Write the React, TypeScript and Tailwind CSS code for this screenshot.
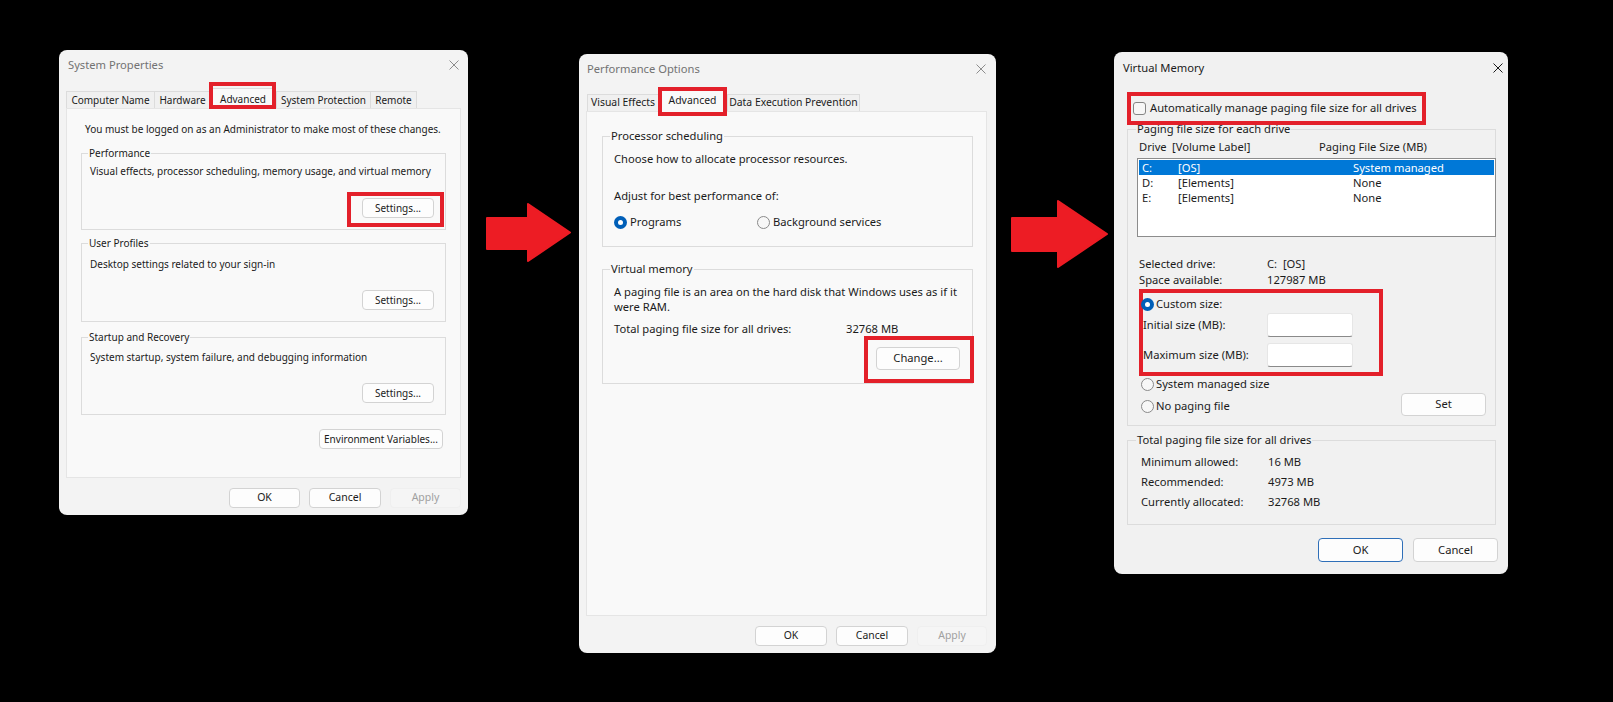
import React from 'react';

type Kids = { children?: React.ReactNode; className?: string };

function CloseX({ className = '' }: { className?: string }) {
  return (
    <svg viewBox="0 0 10 10" className={`h-[10px] w-[10px] shrink-0 ${className}`} fill="none" stroke="currentColor" strokeWidth="1">
      <path d="M0.5 0.5L9.5 9.5M9.5 0.5L0.5 9.5" />
    </svg>
  );
}

function Btn({ children, className = '', disabled = false, primary = false }: Kids & { disabled?: boolean; primary?: boolean }) {
  const look = disabled
    ? 'border-[#efefef] bg-[#f5f5f5] text-[#a0a0a0]'
    : primary
    ? 'border-[#2f6fb8] bg-[#fdfdfd] text-[#1b1b1b]'
    : 'border-[#d3d3d3] bg-[#fdfdfd] text-[#1b1b1b]';
  return <div className={`flex shrink-0 items-center justify-center rounded-[4px] border ${look} ${className}`}>{children}</div>;
}

function Group({ label, className = '', legendClass = '', children }: Kids & { label: string; legendClass?: string }) {
  return (
    <fieldset className={`min-w-0 border border-[#dcdcdc] ${className}`}>
      <legend className={`leading-[16px] ${legendClass}`}>{label}</legend>
      {children}
    </fieldset>
  );
}

function Tab({ children, className = '', active = false }: Kids & { active?: boolean }) {
  return (
    <div
      className={`flex shrink-0 items-center justify-center border-l border-t border-[#dcdcdc] ${
        active ? 'relative z-10 -mb-px border-r bg-[#f9f9f9]' : 'h-[17px] bg-[#f0f0f0]'
      } ${className}`}
    >
      {children}
    </div>
  );
}

function Radio({ checked = false }: { checked?: boolean }) {
  return checked ? (
    <span className="flex h-[13px] w-[13px] shrink-0 items-center justify-center rounded-full bg-[#005fb8]">
      <span className="h-[5px] w-[5px] rounded-full bg-white" />
    </span>
  ) : (
    <span className="h-[13px] w-[13px] shrink-0 rounded-full border border-[#8a8a8a] bg-[#f7f7f7]" />
  );
}

function SizeInput() {
  return <div className="h-[24px] w-[86px] rounded-[3px] border border-[#e6e6e6] border-b-[#8a8a8a] bg-white" />;
}

function SystemProperties() {
  return (
    <div className="flex h-[465px] w-[409px] flex-col rounded-[8px] bg-[#f3f3f3] text-[10px]">
      <div className="flex h-[38px] items-start justify-between pl-[9px] pr-[9px] pt-[7px]">
        <span className="text-[11.2px] leading-[16px] text-[#727272]">System Properties</span>
        <CloseX className="mt-[3px] text-[#8c8c8c]" />
      </div>
      <div className="flex h-[20px] items-end pl-[7px]">
        <Tab className="w-[88px]">Computer Name</Tab>
        <Tab className="w-[56px]">Hardware</Tab>
        <Tab active className="h-[21px] w-[66px]">
          Advanced
          <div className="absolute -left-[2px] -right-[1px] -top-[7px] bottom-0 border-4 border-[#e3202a]" />
        </Tab>
        <Tab className="w-[94px]">System Protection</Tab>
        <Tab className="w-[47px] border-r">Remote</Tab>
      </div>

      <div className="mx-[7px] h-[370px] border border-[#e5e5e5] bg-[#f9f9f9] px-[14px] pt-[12px]">
        <p className="ml-[4px] leading-[16px]">You must be logged on as an Administrator to make most of these changes.</p>

        <Group label="Performance" className="mt-[8px] h-[85px] px-[8px]" legendClass="-ml-[2px] px-[1px]">
          <p className="pt-[2px] leading-[16px]">Visual effects, processor scheduling, memory usage, and virtual memory</p>
          <div className="mt-[19px] flex justify-end">
            <div className="relative mr-[3px]">
              <Btn className="h-[20px] w-[72px]">Settings...</Btn>
              <div className="absolute -bottom-[9px] -left-[15px] -right-[10px] -top-[6px] border-4 border-[#e3202a]" />
            </div>
          </div>
        </Group>

        <Group label="User Profiles" className="mt-[5px] h-[87px] px-[8px]" legendClass="-ml-[2px] px-[1px]">
          <p className="pt-[5px] leading-[16px]">Desktop settings related to your sign-in</p>
          <div className="mt-[18px] flex justify-end">
            <Btn className="mr-[3px] h-[20px] w-[72px]">Settings...</Btn>
          </div>
        </Group>

        <Group label="Startup and Recovery" className="mt-[7px] h-[86px] px-[8px]" legendClass="-ml-[2px] px-[1px]">
          <p className="pt-[4px] leading-[16px]">System startup, system failure, and debugging information</p>
          <div className="mt-[18px] flex justify-end">
            <Btn className="mr-[3px] h-[20px] w-[72px]">Settings...</Btn>
          </div>
        </Group>

        <div className="mt-[14px] flex justify-end">
          <Btn className="mr-[3px] h-[20px] w-[124px]">Environment Variables...</Btn>
        </div>
      </div>

      <div className="mt-[10px] flex justify-end gap-[9px] pr-[7px] text-[10.5px]">
        <Btn className="h-[20px] w-[71px]">OK</Btn>
        <Btn className="h-[20px] w-[72px]">Cancel</Btn>
        <Btn disabled className="h-[20px] w-[71px]">Apply</Btn>
      </div>
    </div>
  );
}

function PerformanceOptions() {
  return (
    <div className="flex h-[599px] w-[417px] flex-col rounded-[8px] bg-[#f3f3f3] text-[11.2px]">
      <div className="flex h-[35px] items-start justify-between pl-[8px] pr-[10px] pt-[7px]">
        <span className="leading-[16px] text-[#727272]">Performance Options</span>
        <CloseX className="mt-[3px] text-[#8c8c8c]" />
      </div>
      <div className="flex h-[22px] items-end pl-[8px] text-[10.4px]">
        <Tab className="w-[71px]">Visual Effects</Tab>
        <Tab active className="h-[23px] w-[69px]">
          Advanced
          <div className="absolute -bottom-[4px] -left-[1px] -right-[1px] -top-[3px] border-4 border-[#e3202a]" />
        </Tab>
        <Tab className="w-[133px] border-r">Data Execution Prevention</Tab>
      </div>

      <div className="ml-[7px] h-[505px] w-[401px] border border-[#e5e5e5] bg-[#f9f9f9] pl-[15px] pt-[16px]">
        <Group label="Processor scheduling" className="h-[119px] w-[371px] px-[11px]" legendClass="-ml-[4px] px-[1px]">
          <p className="pt-[6px] leading-[17px]">Choose how to allocate processor resources.</p>
          <p className="mt-[20px] leading-[17px]">Adjust for best performance of:</p>
          <div className="mt-[10px] flex h-[17px] items-center">
            <div className="flex w-[143px] items-center gap-[3px]">
              <Radio checked />
              <span>Programs</span>
            </div>
            <div className="flex items-center gap-[3px]">
              <Radio />
              <span>Background services</span>
            </div>
          </div>
        </Group>

        <Group label="Virtual memory" className="mt-[14px] h-[123px] w-[371px] px-[11px]" legendClass="-ml-[4px] px-[1px]">
          <p className="whitespace-nowrap pt-[7px] leading-[15px]">
            A paging file is an area on the hard disk that Windows uses as if it
            <br />
            were RAM.
          </p>
          <div className="mt-[6px] flex leading-[17px]">
            <span className="w-[232px]">Total paging file size for all drives:</span>
            <span>32768 MB</span>
          </div>
          <div className="mt-[10px] flex justify-end">
            <div className="relative mr-[1px]">
              <Btn className="h-[23px] w-[84px]">Change...</Btn>
              <div className="absolute -bottom-[13px] -left-[12px] -right-[14px] -top-[11px] border-4 border-[#e3202a]" />
            </div>
          </div>
        </Group>
      </div>

      <div className="mt-[10px] flex justify-end gap-[9px] pr-[9px] text-[10.4px]">
        <Btn className="h-[20px] w-[72px]">OK</Btn>
        <Btn className="h-[20px] w-[72px]">Cancel</Btn>
        <Btn disabled className="h-[20px] w-[70px]">Apply</Btn>
      </div>
    </div>
  );
}

const drives = [
  { d: 'C:', label: '[OS]', size: 'System managed', selected: true },
  { d: 'D:', label: '[Elements]', size: 'None', selected: false },
  { d: 'E:', label: '[Elements]', size: 'None', selected: false },
];

const totals = [
  ['Minimum allowed:', '16 MB'],
  ['Recommended:', '4973 MB'],
  ['Currently allocated:', '32768 MB'],
];

function VirtualMemory() {
  return (
    <div className="flex h-[522px] w-[394px] flex-col rounded-[8px] bg-[#f1f1f1] text-[11.2px]">
      <div className="flex h-[48px] items-start justify-between pl-[9px] pr-[5px] pt-[8px]">
        <span className="leading-[16px]">Virtual Memory</span>
        <CloseX className="mt-[3px] text-[#1b1b1b]" />
      </div>

      <div className="relative ml-[19px] flex h-[16px] items-center gap-[4px] self-start">
        <span className="h-[13px] w-[13px] shrink-0 rounded-[3px] border border-[#858585] bg-[#f7f7f7]" />
        <span className="leading-[16px]">Automatically manage paging file size for all drives</span>
        <div className="absolute -bottom-[9px] -left-[6px] -right-[9px] -top-[8px] border-4 border-[#e3202a]" />
      </div>

      <Group
        label="Paging file size for each drive"
        className="ml-[13px] mt-[5px] h-[305px] w-[369px] pl-[12px] pr-0"
        legendClass="-ml-[4px] px-[1px]"
      >
        <div className="-ml-px flex pt-[2px] leading-[16px]">
          <span className="w-[33px]">Drive</span>
          <span className="w-[147px]">[Volume Label]</span>
          <span>Paging File Size (MB)</span>
        </div>
        <div className="-ml-[3px] mt-[3px] h-[79px] w-[359px] border border-[#8c8c8c] bg-white p-px">
          {drives.map(r => (
            <div
              key={r.d}
              className={`flex h-[15px] items-center leading-[15px] ${r.selected ? 'bg-[#0078d7] text-white' : ''}`}
            >
              <span className="w-[39px] pl-[3px]">{r.d}</span>
              <span className="w-[175px]">{r.label}</span>
              <span>{r.size}</span>
            </div>
          ))}
        </div>

        <div className="-ml-px mt-[19px] leading-[16px]">
          <div className="flex">
            <span className="w-[128px]">Selected drive:</span>
            <span>C:&nbsp;&nbsp;[OS]</span>
          </div>
          <div className="flex">
            <span className="w-[128px]">Space available:</span>
            <span>127987 MB</span>
          </div>
        </div>

        <div className="relative mt-[8px]">
          <div className="absolute -bottom-[9px] -left-[1px] -top-[7px] w-[244px] border-4 border-[#e3202a]" />
          <div className="relative ml-[1px] flex h-[16px] items-center gap-[2px]">
            <Radio checked />
            <span>Custom size:</span>
          </div>
          <div className="relative mt-[1px] flex h-[24px] items-center">
            <span className="ml-[3px] w-[124px]">Initial size (MB):</span>
            <SizeInput />
          </div>
          <div className="relative mt-[6px] flex h-[24px] items-center">
            <span className="ml-[3px] w-[124px]">Maximum size (MB):</span>
            <SizeInput />
          </div>
        </div>

        <div className="mt-[9px] flex">
          <div>
            <div className="ml-[1px] flex h-[16px] items-center gap-[2px]">
              <Radio />
              <span>System managed size</span>
            </div>
            <div className="ml-[1px] mt-[6px] flex h-[16px] items-center gap-[2px]">
              <Radio />
              <span>No paging file</span>
            </div>
          </div>
          <Btn className="ml-auto mr-[9px] mt-[17px] h-[23px] w-[85px]">Set</Btn>
        </div>
      </Group>

      <Group
        label="Total paging file size for all drives"
        className="ml-[13px] mt-[6px] h-[93px] w-[369px] px-[12px]"
        legendClass="-ml-[4px] px-[1px]"
      >
        <div className="pt-[4px] leading-[20px]">
          {totals.map(([k, v]) => (
            <div key={k} className="ml-[1px] flex">
              <span className="w-[127px]">{k}</span>
              <span>{v}</span>
            </div>
          ))}
        </div>
      </Group>

      <div className="mt-[13px] flex justify-end gap-[10px] pr-[10px]">
        <Btn primary className="h-[24px] w-[85px]">OK</Btn>
        <Btn className="h-[24px] w-[85px]">Cancel</Btn>
      </div>
    </div>
  );
}

export default function App() {
  return (
    <div className="flex h-[702px] w-[1613px] items-start overflow-hidden bg-black font-['Noto_Sans',sans-serif] text-[#1b1b1b]">
      <div className="ml-[59px] mt-[50px] shrink-0">
        <SystemProperties />
      </div>

      {/* arrow 1 */}
      <svg className="ml-[18px] mt-[203px] shrink-0" width="85" height="59" viewBox="0 0 85 59">
        <path d="M1 15 H42 V1 L84 29.5 L42 58 V46 H1 Z" fill="#ed1c24" stroke="#ed1c24" strokeWidth="2" strokeLinejoin="round" />
      </svg>

      <div className="ml-[8px] mt-[54px] shrink-0">
        <PerformanceOptions />
      </div>

      {/* arrow 2 */}
      <svg className="ml-[15px] mt-[200px] shrink-0" width="97" height="68" viewBox="0 0 97 68">
        <path d="M1 18 H47 V1 L96 34 L47 67 V51 H1 Z" fill="#ed1c24" stroke="#ed1c24" strokeWidth="2" strokeLinejoin="round" />
      </svg>

      <div className="ml-[6px] mt-[52px] shrink-0">
        <VirtualMemory />
      </div>
    </div>
  );
}
